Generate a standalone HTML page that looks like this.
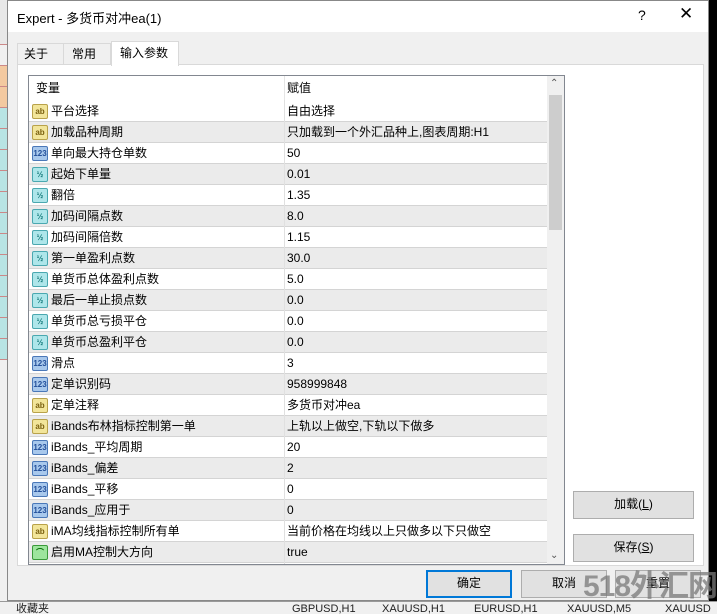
<!DOCTYPE html><html><head><meta charset="utf-8"><style>
*{margin:0;padding:0;box-sizing:border-box}
html,body{width:717px;height:614px;overflow:hidden}
body{background:#000;font-family:"Liberation Sans","Noto Sans CJK SC",sans-serif;font-size:12px;color:#000;position:relative}
.a{position:absolute}
.strip div{position:absolute;left:0;width:8px;height:21px;border-bottom:1px solid #c88}
#dlg{left:7px;top:0;width:702px;height:601px;background:#f0f0f0;border:1px solid #888}
.row{position:absolute;left:0;width:518px;height:21px;border-bottom:1px solid #d4d4d4;line-height:20px}
.row .n{position:absolute;left:22px}
.row .v{position:absolute;left:258px}
.row .ic{position:absolute;left:3px;top:3px;width:16px;height:15px;border-radius:2px;font-size:8px;font-weight:bold;line-height:14px;text-align:center}
.ab{background:#f2e59a;border:1px solid #b9a24a;color:#7a6010}
.n3{background:#a8c8ec;border:1px solid #4a78b8;color:#24509a}
.hf{background:#aee6ea;border:1px solid #4aa8b0;color:#177}
.bo{background:#9de59d;border:1px solid #3a9a3a;color:#060}
.btn{position:absolute;background:#e1e1e1;border:1px solid #adadad;text-align:center;line-height:25px;font-size:12px}
</style></head><body>
<div class="strip">
<div style="top:0;height:45px;background:#e8e8e8"></div>
<div style="top:45px;background:#f0f0f0"></div>
<div style="top:66px;background:#f3c9a0"></div>
<div style="top:87px;background:#f3c9a0"></div>
<div style="top:108px;background:#b8e4e4"></div><div style="top:129px;background:#b8e4e4"></div><div style="top:150px;background:#b8e4e4"></div><div style="top:171px;background:#b8e4e4"></div><div style="top:192px;background:#b8e4e4"></div><div style="top:213px;background:#b8e4e4"></div><div style="top:234px;background:#b8e4e4"></div><div style="top:255px;background:#b8e4e4"></div><div style="top:276px;background:#b8e4e4"></div><div style="top:297px;background:#b8e4e4"></div><div style="top:318px;background:#b8e4e4"></div><div style="top:339px;background:#b8e4e4"></div>
<div style="top:360px;height:250px;background:#f0f0f0;border:none"></div>
</div>
<div class="a" style="left:709px;top:82px;width:4px;height:45px;border:1px solid #2c2"></div>
<div class="a" style="left:0;top:601px;width:717px;height:13px;background:#f0f0f0;border-top:1px solid #999;font-size:11px;line-height:18px;color:#222;white-space:nowrap;overflow:hidden">
<span class="a" style="left:16px;top:-2px">收藏夹</span>
<span class="a" style="left:292px;top:-2px">GBPUSD,H1</span><span class="a" style="left:382px;top:-2px">XAUUSD,H1</span><span class="a" style="left:474px;top:-2px">EURUSD,H1</span><span class="a" style="left:567px;top:-2px">XAUUSD,M5</span><span class="a" style="left:665px;top:-2px">XAUUSD</span>
</div>
<div id="dlg" class="a">
<div class="a" style="left:0;top:0;width:700px;height:31px;background:#fff"></div>
<div class="a" style="left:9px;top:7px;font-size:13px">Expert - 多货币对冲ea(1)</div>
<div class="a" style="left:630px;top:6px;font-size:14px">?</div>
<div class="a" style="left:671px;top:3px;font-size:17px">✕</div>
<div class="a" style="left:9px;top:63px;width:687px;height:502px;background:#fff;border:1px solid #d9d9d9"></div>
<div class="a" style="left:9px;top:42px;width:47px;height:22px;background:#f0f0f0;border:1px solid #d9d9d9;line-height:20px;padding-left:6px">关于</div>
<div class="a" style="left:55px;top:42px;width:48px;height:22px;background:#f0f0f0;border:1px solid #d9d9d9;line-height:20px;padding-left:8px">常用</div>
<div class="a" style="left:103px;top:40px;width:68px;height:25px;background:#fff;border:1px solid #d9d9d9;border-bottom:none;line-height:22px;padding-left:8px">输入参数</div>
<div class="a" style="left:20px;top:74px;width:537px;height:490px;border:1px solid #828790;background:#fff;overflow:hidden">
<div class="a" style="left:0;top:0;width:518px;height:24px;line-height:24px"><span class="a" style="left:7px">变量</span><span class="a" style="left:258px">赋值</span></div>
<div class="a" style="left:255px;top:0;width:1px;height:24px;background:#e5e5e5"></div>
<div class="a" style="left:518px;top:0;width:17px;height:488px;background:#f0f0f0"></div>
<div class="a" style="left:520px;top:19px;width:13px;height:135px;background:#cdcdcd"></div>
<div class="a" style="left:521px;top:2px;font-size:10px;color:#555">⌃</div>
<div class="a" style="left:521px;top:474px;font-size:10px;color:#555">⌄</div>
<div class="a" style="left:0;top:25px;width:518px">
<div class="row" style="top:0;background:#fff"><span class="ic ab">ab</span><span class="n">平台选择</span><span class="v">自由选择</span></div>
<div class="row" style="top:21px;background:#ebebeb"><span class="ic ab">ab</span><span class="n">加载品种周期</span><span class="v">只加载到一个外汇品种上,图表周期:H1</span></div>
<div class="row" style="top:42px;background:#fff"><span class="ic n3">123</span><span class="n">单向最大持仓单数</span><span class="v">50</span></div>
<div class="row" style="top:63px;background:#ebebeb"><span class="ic hf">½</span><span class="n">起始下单量</span><span class="v">0.01</span></div>
<div class="row" style="top:84px;background:#fff"><span class="ic hf">½</span><span class="n">翻倍</span><span class="v">1.35</span></div>
<div class="row" style="top:105px;background:#ebebeb"><span class="ic hf">½</span><span class="n">加码间隔点数</span><span class="v">8.0</span></div>
<div class="row" style="top:126px;background:#fff"><span class="ic hf">½</span><span class="n">加码间隔倍数</span><span class="v">1.15</span></div>
<div class="row" style="top:147px;background:#ebebeb"><span class="ic hf">½</span><span class="n">第一单盈利点数</span><span class="v">30.0</span></div>
<div class="row" style="top:168px;background:#fff"><span class="ic hf">½</span><span class="n">单货币总体盈利点数</span><span class="v">5.0</span></div>
<div class="row" style="top:189px;background:#ebebeb"><span class="ic hf">½</span><span class="n">最后一单止损点数</span><span class="v">0.0</span></div>
<div class="row" style="top:210px;background:#fff"><span class="ic hf">½</span><span class="n">单货币总亏损平仓</span><span class="v">0.0</span></div>
<div class="row" style="top:231px;background:#ebebeb"><span class="ic hf">½</span><span class="n">单货币总盈利平仓</span><span class="v">0.0</span></div>
<div class="row" style="top:252px;background:#fff"><span class="ic n3">123</span><span class="n">滑点</span><span class="v">3</span></div>
<div class="row" style="top:273px;background:#ebebeb"><span class="ic n3">123</span><span class="n">定单识别码</span><span class="v">958999848</span></div>
<div class="row" style="top:294px;background:#fff"><span class="ic ab">ab</span><span class="n">定单注释</span><span class="v">多货币对冲ea</span></div>
<div class="row" style="top:315px;background:#ebebeb"><span class="ic ab">ab</span><span class="n">iBands布林指标控制第一单</span><span class="v">上轨以上做空,下轨以下做多</span></div>
<div class="row" style="top:336px;background:#fff"><span class="ic n3">123</span><span class="n">iBands_平均周期</span><span class="v">20</span></div>
<div class="row" style="top:357px;background:#ebebeb"><span class="ic n3">123</span><span class="n">iBands_偏差</span><span class="v">2</span></div>
<div class="row" style="top:378px;background:#fff"><span class="ic n3">123</span><span class="n">iBands_平移</span><span class="v">0</span></div>
<div class="row" style="top:399px;background:#ebebeb"><span class="ic n3">123</span><span class="n">iBands_应用于</span><span class="v">0</span></div>
<div class="row" style="top:420px;background:#fff"><span class="ic ab">ab</span><span class="n">iMA均线指标控制所有单</span><span class="v">当前价格在均线以上只做多以下只做空</span></div>
<div class="row" style="top:441px;background:#ebebeb"><span class="ic bo">⌒</span><span class="n">启用MA控制大方向</span><span class="v">true</span></div>
</div>
<div class="a" style="left:255px;top:24px;width:1px;height:470px;background:#e0e0e0"></div>
</div>
<div class="btn" style="left:565px;top:490px;width:121px;height:28px">加载(<u>L</u>)</div>
<div class="btn" style="left:565px;top:533px;width:121px;height:28px">保存(<u>S</u>)</div>
<div class="btn" style="left:418px;top:569px;width:86px;height:28px;border:2px solid #0078d7;line-height:23px">确定</div>
<div class="btn" style="left:513px;top:569px;width:86px;height:28px">取消</div>
<div class="btn" style="left:607px;top:569px;width:86px;height:28px">重置</div>
</div>
<div class="a" style="left:718px;top:0;width:0"></div>
<div class="a" style="left:709px;top:0;width:8px;height:601px;background:#000"></div>
<div class="a" style="left:583px;top:570px;font-size:30px;line-height:34px;font-weight:bold;color:rgba(120,120,120,.75);white-space:nowrap;letter-spacing:-1px">518外汇网</div>
</body></html>
